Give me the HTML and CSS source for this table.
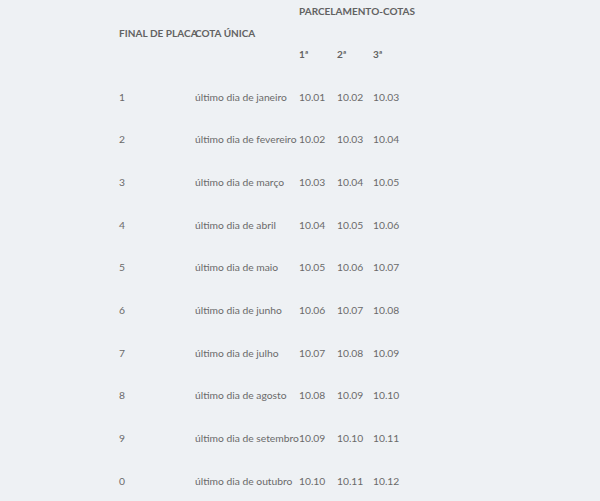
FILE: index.html
```html
<!DOCTYPE html>
<html lang="pt-BR">
<head>
<meta charset="utf-8">
<link rel="stylesheet" href="styles.css">
</head>
<body>
<div class="page">
  <table class="cotas">
    <colgroup>
      <col class="c-placa">
      <col class="c-unica">
      <col class="c-p1">
      <col class="c-p2">
      <col class="c-p3">
    </colgroup>
    <thead>
      <tr>
        <th rowspan="2" class="th-placa">FINAL DE PLACA</th>
        <th rowspan="2">COTA ÚNICA</th>
        <th colspan="3">PARCELAMENTO-COTAS</th>
      </tr>
      <tr>
        <th>1ª</th>
        <th>2ª</th>
        <th>3ª</th>
      </tr>
    </thead>
    <tbody>
      <tr><td>1</td><td>último dia de janeiro</td><td>10.01</td><td>10.02</td><td>10.03</td></tr>
      <tr><td>2</td><td>último dia de fevereiro</td><td>10.02</td><td>10.03</td><td>10.04</td></tr>
      <tr><td>3</td><td>último dia de março</td><td>10.03</td><td>10.04</td><td>10.05</td></tr>
      <tr><td>4</td><td>último dia de abril</td><td>10.04</td><td>10.05</td><td>10.06</td></tr>
      <tr><td>5</td><td>último dia de maio</td><td>10.05</td><td>10.06</td><td>10.07</td></tr>
      <tr><td>6</td><td>último dia de junho</td><td>10.06</td><td>10.07</td><td>10.08</td></tr>
      <tr><td>7</td><td>último dia de julho</td><td>10.07</td><td>10.08</td><td>10.09</td></tr>
      <tr><td>8</td><td>último dia de agosto</td><td>10.08</td><td>10.09</td><td>10.10</td></tr>
      <tr><td>9</td><td>último dia de setembro</td><td>10.09</td><td>10.10</td><td>10.11</td></tr>
      <tr><td>0</td><td>último dia de outubro</td><td>10.10</td><td>10.11</td><td>10.12</td></tr>
    </tbody>
  </table>
</div>
</body>
</html>
```

FILE: styles.css
```css
html, body {
  margin: 0;
  padding: 0;
  background: #eef1f4;
}

.page {
  padding-left: 119px;
  overflow: hidden;
  height: 501px;
}

.cotas {
  border-collapse: collapse;
  table-layout: fixed;
  width: 330px;
  margin-top: -10px;
  font-family: Lato, "Open Sans", sans-serif;
  font-size: 10.3px;
  color: #6a6a6a;
}

.c-placa { width: 76px; }
.c-unica { width: 104px; }
.c-p1 { width: 38px; }
.c-p2 { width: 36px; }
.c-p3 { width: 76px; }

.cotas tr {
  height: 42.67px;
}

.cotas th,
.cotas td {
  padding: 0;
  text-align: left;
  vertical-align: middle;
  white-space: nowrap;
  overflow: visible;
}

.cotas th {
  font-weight: 700;
  font-size: 10px;
  color: #626262;
}

.cotas .th-placa {
  letter-spacing: 0.05px;
}
```
